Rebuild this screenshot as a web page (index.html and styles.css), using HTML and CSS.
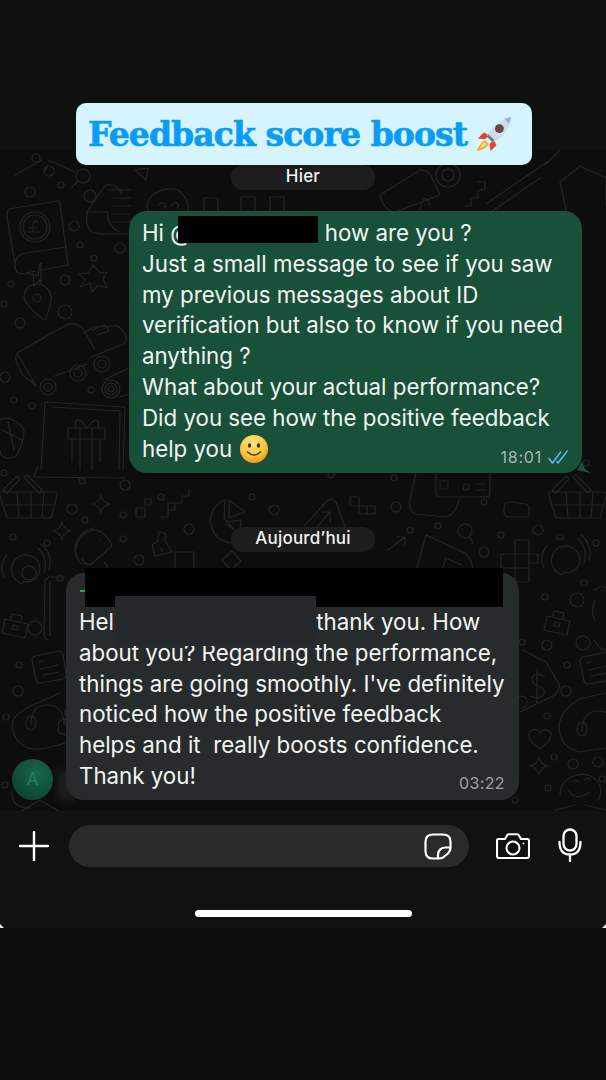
FILE: index.html
```html
<!DOCTYPE html>
<html lang="en">
<head>
    <meta charset="UTF-8">
    <meta name="viewport" content="width=device-width, initial-scale=1.0">
    <title>Feedback score boost</title>
    <link rel="stylesheet" href="styles.css">
</head>
<body>
    <div class="topBar"></div>

    <div class="banner">
        <span class="bannerText">Feedback score boost</span>
        <svg class="rocket" viewBox="0 0 38 38">
            <path d="M8 17 L2 23 L9 24 L14 20Z" fill="#e8402a"/>
            <path d="M21 30 L15 36 L14 29 L18 24Z" fill="#e8402a"/>
            <path d="M9 25 C5 27 2 33 1 36 C5 35 11 33 13 29Z" fill="#f7a823"/>
            <path d="M8 27 C6 29 5 31 4 33 C7 32 9 31 11 29Z" fill="#fde68a"/>
            <path d="M11 21 C15 12 24 4 36 1 C35 13 27 23 17 27Z" fill="#d3dce6"/>
            <path d="M29 2.700 L36 1 C35.600 3.500 35 5.800 34 8Z" fill="#8fb6d8"/>
            <path d="M11 21 L17 27 L19 25 L13 19Z" fill="#6b7785"/>
            <circle cx="24" cy="13" r="4.500" fill="#44505e"/>
            <circle cx="24" cy="13" r="2.600" fill="#a0312c"/>
        </svg>
    </div>

    <main class="chat">
        <svg class="doodles" viewBox="0 150 606 661" fill="none" stroke="#252525" stroke-width="1.200" stroke-linecap="round" stroke-linejoin="round">
            <defs>
                <path id="basket" d="M3 17 H58 Q61 17 60 21 L54 43 H10 L3 21 Q2 17 3 17Z M8 30 H56 M20 17 L22 43 M34 17 L34 43 M47 17 L45 43 M6 15 L20 1 L23 4 L10 18Z M27 2 L30 0 L45 15 L42 18Z"/>
                <path id="speech" d="M14 37 C6 33 2 27 4 19 C6 10 15 6 23 9 C31 12 34 21 30 28 C27 34 20 36 16 34Z M22 20 H22.500 M14 22 H14.500 M-4 30 C-8 22 -6 13 -1 8 M36 25 C39 17 37 7 30 1 M41 22 C44 14 41 3 33 -3"/>
                <path id="brief" d="M2 9 L25 14 L22 28 L-1 23Z M8 9 L9 4 L19 6 L18 11 M10 15 L15 16 L14 20 L9 19Z"/>
                <path id="note" d="M5 5 L29 0 Q32 0 33 3 L36 24 Q36 27 33 28 L10 32 Q7 32 6 29 L2 9 Q2 6 5 5Z M9 11 L13 10 M11 18 L28 14 M13 24 L29 21"/>
                <path id="headset" d="M-6 34 C-6 22 -2 14 10 14 C22 14 27 22 27 34 M-11 32 a5 7 0 1 0 10 0 a5 7 0 1 0 -10 0 M22 36 a7 5 0 1 0 12 0 a7 5 0 1 0 -12 0 M29 26 a5 6 0 1 0 8 0 a5 6 0 1 0 -8 0"/>
                <path id="star4" d="M9 0 C10 5 12 8 18 9 C12 10 10 13 9 18 C8 13 5 10 0 9 C5 8 8 5 9 0Z"/>
                <path id="heart" d="M12 21 C4 15 0 11 1 6 C3 0 10 0 12 5 C15 0 22 1 23 6 C23 12 19 15 12 21Z"/>
            </defs>

            <!-- left column -->
            <path d="M9 209 L58 201 Q60 201 60 203 L68 265 L26 273 Q14 276 15 264 L7 217 Q7 210 9 209Z M15 264 Q16 254 26 253 L66 247 M26 273 L38 276 L40 263 M33 273 L34 286 L40 280 L41 284 L41 263"/>
            <circle cx="35" cy="227" r="15"/><circle cx="35" cy="227" r="12"/>
            <path d="M38 222 Q33 219 33 226 V232 H28 H40 M29 228 H37"/>
            <path d="M37 284 C46 284 52 292 51 300 C50 308 47 315 45 320 C40 318 27 306 24 298 C24 290 29 284 37 284Z"/><circle cx="37" cy="298" r="4"/>
            <path d="M17 353 L68 324 Q78 322 84 330 L95 350 M36 386 L23 375 L18 366 Q14 358 17 353Z M55 376 L87 364 M91 357 L106 351 L124 344 Q128 340 124 332 L118 326 L93 327 L84 333 M92 330 L105 325 L109 331 L97 335"/>
            <circle cx="48" cy="387" r="8"/><circle cx="48" cy="387" r="4"/>
            <circle cx="78" cy="373" r="8"/><circle cx="78" cy="373" r="4"/>
            <circle cx="102" cy="364" r="8"/><circle cx="102" cy="364" r="4"/>
            <circle cx="111" cy="389" r="9"/><circle cx="111" cy="389" r="6"/><circle cx="111" cy="389" r="3"/>
            <path d="M104 380 L129 368 M120 397 L129 394"/>
            <path d="M93 265 L100 273 L107 272 L103 279 L107 288 L98 285 L92 292 L90 283 L80 287 L85 280 L79 274 L88 273Z"/>
            <path d="M46 402 L125 407 L123 470 M41 470 L45 402 M52 407 L120 411 L119 470 M68 428 H105 V439 H68Z M72 439 V462 M100 439 V462 M80 428 V470 M92 428 V470 M86 427 C80 417 73 418 76 427 M88 427 C94 417 101 419 98 427"/>
            <path d="M34 477 L125 478 M38 466 L34 477"/>
            <path d="M0 420 C8 416 18 420 24 430 C24 440 20 450 16 456 C8 460 0 458 0 450 M8 422 L14 450 M2 430 L22 440"/>
            <use href="#basket" x="-3" y="475"/>
            <use href="#basket" x="546" y="475"/>
            <use href="#star4" x="92" y="495"/>
            <use href="#star4" x="53" y="522"/>
            <path d="M136 508 h9 v9 h-9z M145 499 h6 v6 h-6z M168 503 h7 v7 h-7z M175 503 h7 v-7 h7 v-6 M175 510 h-7 v7 h-7"/>
            <path d="M225 500 A22 22 0 1 0 243 540 L224 518Z M229 500 L245 512 L229 518Z M226 522 L241 520 L240 534 L226 524"/>
            <path d="M80 563 C70 552 78 536 90 531 C100 527 110 538 112 546 L90 565Z M76 555 C72 542 82 530 94 528 M90 565 Q84 564 82 558 M100 540 H100.500 M104 545 H104.500"/>
            <path d="M104 562 Q110 567 106 573"/>
            <use href="#speech" x="8" y="547"/>
            <use href="#speech" x="548" y="538"/>
            <path d="M159 532 L166 534 L165 541 L172 552 L155 556 L152 545 L158 541Z M161 548 L162 552"/>
            <path d="M175 552 h19 v19 h-19z"/>
            <path d="M222 560 l10 -9 l9 10 l-10 9z M231 560 h.5"/>
            <use href="#brief" x="3" y="610"/>
            <use href="#brief" x="545" y="607"/>
            <path d="M65 577 h-14 q-5 0 -6 5 l-1 52 q0 5 5 6 M50 582 V636"/>
            <use href="#note" x="30" y="651"/>
            <use href="#note" x="578" y="652"/>
            <path d="M60 693 L33 705 Q12 715 12 725 Q14 745 32 749 Q45 750 65 743"/>
            <use href="#headset" x="37" y="691"/>
            <path d="M606 693 L580 699 Q560 710 559 727 Q560 748 580 752 L606 748"/>
            <use href="#headset" x="588" y="697"/>
            <path d="M15 815 L40 800 L65 815 M12 790 Q10 808 30 808"/>

            <!-- top row -->
            <path d="M122 194 Q114 180 104 187 L87 212 C85 230 90 235 108 234 H130 M108 190 H130 M112 198 H130 M112 206 H130 M112 214 H130 M112 222 H130 M87 212 H108 Q106 226 120 232"/>
            <circle cx="83" cy="176" r="7"/><path d="M78 181 L72 187"/>
            <path d="M48 165 L45 171 M42 160 L15 175 M48 160 L75 172"/>
            <circle cx="49" cy="171" r="5"/>
            <circle cx="90" cy="196" r="6"/>
            <path d="M135 170 L146 180 L148 168Z"/>
            <path d="M150 215 C140 198 160 185 178 190 C190 200 190 210 186 212"/>
            <path d="M158 205 C164 200 168 205 164 208 M171 205 C177 200 181 205 177 208"/>
            <path d="M204 198 h14 v14 h-14z M241 197 h14 v16 h-14z M270 197 h14 v16 h-14z M380 195 L420 170 Q430 170 432 178 L440 195 L395 212 Q385 212 380 195Z M478 182 h7 v8 h-7 v8 h-7 v8 h-6 M486 204 L550 160 M491 212 L540 178 M545 165 L560 150"/>
            <circle cx="448" cy="175" r="12"/><circle cx="448" cy="175" r="6"/>
            <path d="M420 210 Q424 190 430 205"/>
            <path d="M560 182 L580 166 L606 178 V205 M560 182 L566 210"/>

            <!-- middle and right -->
            <path d="M416 473 L410 500 Q408 512 416 514 L445 517 Q455 516 459 500 M436 473 V493 Q436 497 440 497 H486 Q490 497 490 493 V473 M440 481 h8 v8 h-8z M476 484 H486 M476 490 H486"/>
            <path d="M504 508 Q504 502 510 502 H514 Q520 504 526 504 Q530 506 529 512 V513 Q530 517 526 517 H510 Q504 517 504 512Z"/>
            <path d="M305 525 L328 500 Q332 498 336 502 L345 527 Q346 532 340 536 L320 545 M316 528 L330 512 M322 512 H330 V522"/>
            <path d="M350 497 h9 v9 h-9z M359 506 h8 v8 h-8z M367 506 h8 v8 h-8z"/>
            <path d="M388 550 L405 537 M397 537 H405 V545"/>
            <circle cx="465" cy="531" r="7"/><path d="M470 537 L473 543"/>
            <path d="M426 535 L415 575 M426 535 L465 553 Q475 562 472 575 M440 575 L446 558 L462 565"/>
            <path d="M515 540 h14 v14 h-14z M501 554 h14 v14 h-14z M515 554 h14 v14 h-14z M529 554 h9 v9 h-9z M515 568 h14 v14 h-14z"/>
            <path d="M523 650 L546 662 L560 686 L555 695 L520 712 M521 708 A6 6 0 1 0 515 702"/>
            <path d="M537 669 V703 M544 676 Q534 672 532 678 Q532 685 538 686 Q545 687 544 694 Q540 700 530 696"/>
            <use href="#heart" x="528" y="728"/>
            <use href="#star4" x="530" y="757"/>
            <path d="M560 795 C560 780 575 772 588 775 C600 780 604 790 598 800 M568 790 Q576 802 590 792 M574 782 Q576 778 579 782 M585 780 Q587 776 590 780"/>
            <path d="M555 810 L575 805 M585 805 L606 810"/>
            <path d="M594 590 Q606 583 606 590 M595 620 Q590 612 595 600 M594 640 Q600 650 606 650"/>

            <!-- small rings -->
            <g>
                <circle cx="36" cy="158" r="4"/><circle cx="30" cy="192" r="5"/><circle cx="61" cy="185" r="3"/>
                <circle cx="74" cy="226" r="5"/><circle cx="80" cy="245" r="3"/><circle cx="120" cy="248" r="5"/><circle cx="94" cy="258" r="3"/>
                <circle cx="65" cy="280" r="5"/><circle cx="11" cy="284" r="3"/><circle cx="4" cy="304" r="3"/><circle cx="65" cy="312" r="7"/><circle cx="20" cy="323" r="5"/>
                <circle cx="5" cy="377" r="5"/><circle cx="91" cy="390" r="3"/><circle cx="14" cy="400" r="3"/><circle cx="32" cy="406" r="3"/>
                <circle cx="4" cy="473" r="3"/><circle cx="82" cy="481" r="3"/><circle cx="125" cy="485" r="5"/><circle cx="161" cy="497" r="3"/><circle cx="123" cy="515" r="3"/>
                <circle cx="72" cy="509" r="5"/><circle cx="85" cy="520" r="3"/><circle cx="13" cy="537" r="3"/><circle cx="47" cy="543" r="3"/>
                <circle cx="189" cy="529" r="5"/><circle cx="252" cy="497" r="3"/><circle cx="274" cy="510" r="5"/>
                <circle cx="139" cy="560" r="5"/><circle cx="123" cy="539" r="3"/><circle cx="60" cy="578" r="3"/>
                <circle cx="29" cy="573" r="7"/><circle cx="35" cy="628" r="7"/><circle cx="19" cy="665" r="3"/><circle cx="18" cy="691" r="5"/><circle cx="6" cy="717" r="3"/><circle cx="5" cy="785" r="3"/>
                <circle cx="394" cy="478" r="3"/><circle cx="331" cy="475" r="3"/><circle cx="396" cy="507" r="5"/><circle cx="410" cy="530" r="3"/><circle cx="438" cy="526" r="3"/><circle cx="484" cy="552" r="5"/>
                <circle cx="484" cy="502" r="3"/><circle cx="501" cy="535" r="3"/><circle cx="538" cy="530" r="5"/><circle cx="560" cy="537" r="3"/><circle cx="596" cy="543" r="3"/>
                <circle cx="545" cy="597" r="3"/><circle cx="584" cy="583" r="3"/><circle cx="577" cy="600" r="7"/><circle cx="547" cy="645" r="5"/><circle cx="522" cy="642" r="3"/><circle cx="583" cy="643" r="7"/><circle cx="567" cy="665" r="3"/>
                <circle cx="566" cy="691" r="5"/><circle cx="547" cy="716" r="3"/><circle cx="554" cy="757" r="3"/><circle cx="573" cy="764" r="5"/><circle cx="598" cy="762" r="5"/><circle cx="602" cy="779" r="3"/><circle cx="548" cy="788" r="3"/><circle cx="515" cy="800" r="3"/>
                <circle cx="466" cy="487" r="3"/><circle cx="586" cy="463" r="3"/>
            </g>
        </svg>

        <div class="thread">
            <div class="datePill">Hier</div>

            <div class="bubble outgoing">
                <p class="msgText">Hi @<span class="nameGap"></span>how are you ?<br>Just a small message to see if you saw<br>my previous messages about ID<br>verification but also to know if you need<br>anything ?<br>What about your actual performance?<br>Did you see how the positive feedback<br>help you <svg class="smiley" viewBox="0 0 28 28">
                    <defs><radialGradient id="smileFill" cx="45%" cy="30%" r="75%"><stop offset="0" stop-color="#ffe680"/><stop offset="0.6" stop-color="#fcc63a"/><stop offset="1" stop-color="#ee8f1c"/></radialGradient></defs>
                    <circle cx="14" cy="14" r="14" fill="url(#smileFill)"/>
                    <ellipse cx="9.500" cy="10.500" rx="1.700" ry="2.300" fill="#4a3114"/>
                    <ellipse cx="18.500" cy="10.500" rx="1.700" ry="2.300" fill="#4a3114"/>
                    <path d="M7.500 17 Q14 23 20.500 17" fill="none" stroke="#4a3114" stroke-width="1.500" stroke-linecap="round"/>
                </svg></p>
                <div class="hideMention"></div>
                <div class="msgMeta">
                    <span class="msgTime">18:01</span>
                    <svg class="ticks" viewBox="0 0 22 16" fill="none" stroke="#5ab4e6" stroke-width="1.800" stroke-linecap="round" stroke-linejoin="round">
                        <path d="M1 9 L5 14 L14 2"/>
                        <path d="M10 12.500 L11 14 L21 1"/>
                    </svg>
                </div>
                <svg class="tailRight" viewBox="0 0 14 12"><path d="M5 0 Q5 7 14 12 Q8 11 0 9Z" fill="#18503a"/></svg>
            </div>

            <div class="datePill datePillToday">Aujourd’hui</div>

            <div class="incomingRow">
                <div class="avatar">A</div>
                <div class="bubble incoming">
                    <div class="tailShadow"></div>
                    <div class="senderMark"></div>
                    <p class="msgText">Hello,&nbsp; I'm doing&nbsp; well, thank you. How<br>about you? Regarding the performance,<br>things are going smoothly. I've definitely<br>noticed how the positive feedback<br>helps and it &nbsp;really boosts confidence.<br>Thank you!</p>
                    <div class="msgMeta msgMetaIn"><span class="msgTime msgTimeIn">03:22</span></div>
                    <div class="hideName"></div>
                    <div class="hideReply"></div>
                </div>
            </div>
        </div>
    </main>

    <div class="composer">
        <svg class="plusIcon" viewBox="0 0 30 30" fill="none" stroke="#fff" stroke-width="2.400" stroke-linecap="round"><path d="M15 1 V29 M1 15 H29"/></svg>
        <div class="inputBox">
            <svg class="stickerIcon" viewBox="0 0 28 27" fill="none" stroke="#fff" stroke-width="2.200" stroke-linejoin="round">
                <path d="M9 1.500 H19 Q26.500 1.500 26.500 9 V15 Q26.500 18 24 20.500 L19 24.500 Q17 25.500 15 25.500 H9 Q1.500 25.500 1.500 18 V9 Q1.500 1.500 9 1.500Z"/>
                <path d="M26.500 14.500 H22 Q15 14.500 14 21 V25.500"/>
            </svg>
        </div>
        <svg class="cameraIcon" viewBox="0 0 34 26" fill="none" stroke="#fff" stroke-width="2.100" stroke-linejoin="round">
            <path d="M2.500 6 H9 L11.500 1.800 Q12 1.200 13 1.200 H21 Q22 1.200 22.500 1.800 L25 6 H31.500 Q33 6 33 7.500 V23 Q33 25 31 25 H3 Q1 25 1 23 V7.500 Q1 6 2.500 6Z"/>
            <circle cx="17" cy="15" r="6.500"/>
            <circle cx="27.500" cy="10.500" r="1" fill="#fff" stroke="none"/>
        </svg>
        <svg class="micIcon" viewBox="0 0 24 34" fill="none" stroke="#fff" stroke-width="2.300" stroke-linecap="round">
            <rect x="5.500" y="1.500" width="13" height="21" rx="6.500"/>
            <path d="M1.500 14 Q1.500 26.500 12 26.500 Q22.500 26.500 22.500 14 M12 26.500 V33"/>
        </svg>
    </div>

    <div class="homeArea"><div class="homeBar"></div></div>
    <div class="pageEnd">
        <span class="cornerLeft"></span>
        <span class="cornerRight"></span>
    </div>
</body>
</html>
```

FILE: styles.css
```css
* {
    box-sizing: border-box;
}
html, body {
    margin: 0;
    padding: 0;
}
body {
    position: relative;
    width: 606px;
    height: 1080px;
    overflow: hidden;
    background-color: #0c0c0c;
    font-family: Inter, "Liberation Sans", sans-serif;
    color: #f3f5f4;
}
.topBar {
    height: 150px;
    background-color: #101010;
}
.banner {
    position: absolute;
    left: 76px;
    top: 103px;
    width: 456px;
    height: 62px;
    padding-left: 12px;
    display: flex;
    align-items: center;
    gap: 8px;
    background-color: #d5f4fe;
    border-radius: 10px;
    z-index: 3;
}
.bannerText {
    width: 380px;
    font-family: "DejaVu Serif", "Liberation Serif", serif;
    font-weight: 700;
    font-size: 33px;
    letter-spacing: -0.9px;
    -webkit-text-stroke: 0.7px #0a9cf5;
    color: #0a9cf5;
    white-space: nowrap;
}
.rocket {
    width: 37px;
    height: 37px;
    flex: none;
}
.chat {
    position: relative;
    height: 661px;
    background-color: #0d0d0d;
    overflow: hidden;
}
.doodles {
    position: absolute;
    left: 0;
    top: 0;
    width: 606px;
    height: 661px;
}
.thread {
    position: relative;
    z-index: 0;
    display: flex;
    flex-direction: column;
    padding-top: 15px;
}
.datePill {
    align-self: center;
    width: 144px;
    height: 25px;
    line-height: 23px;
    text-align: center;
    font-size: 17px;
    font-weight: 500;
    letter-spacing: 0.2px;
    color: #f2f2f2;
    background-color: #1d1d1d;
    border-radius: 12px;
}
.datePillToday {
    margin-top: 54px;
}
.bubble {
    position: relative;
    width: 453px;
    border-radius: 18px;
}
.outgoing {
    align-self: flex-end;
    height: 262px;
    margin-top: 21px;
    margin-right: 24px;
    padding: 7px 13px 0;
    background-color: #18503a;
}
.incomingRow {
    display: flex;
    align-items: flex-end;
    margin-top: 21px;
    padding-left: 12px;
}
.incoming {
    height: 227px;
    margin-left: 13px;
    padding: 34px 13px 0;
    background-color: #282b2b;
}
.msgText {
    margin: 0;
    font-size: 22.3px;
    line-height: 30.8px;
    white-space: nowrap;
    color: #f1f4f2;
}
.nameGap {
    display: inline-block;
    width: 133px;
}
.smiley {
    width: 28px;
    height: 28px;
    vertical-align: -6px;
    margin-left: 2px;
}
.msgMeta {
    position: absolute;
    right: 14px;
    bottom: 6px;
    display: flex;
    align-items: center;
    gap: 6px;
}
.msgMetaIn {
    bottom: 7px;
}
.msgTime {
    font-size: 16px;
    letter-spacing: 0.8px;
    color: #a3bbaf;
}
.msgTimeIn {
    letter-spacing: 0.4px;
    color: #a0a3a3;
}
.ticks {
    width: 20px;
    height: 15px;
}
.tailRight {
    position: absolute;
    right: -9px;
    bottom: 0;
    width: 14px;
    height: 12px;
}
.avatar {
    width: 41px;
    height: 41px;
    margin-bottom: 0;
    flex: none;
    text-align: center;
    line-height: 41px;
    font-size: 17px;
    color: #2f7a5c;
    background: radial-gradient(circle at 60% 35%, #17684a, #0e4531 75%);
    border-radius: 50%;
}
.tailShadow {
    position: absolute;
    left: -8px;
    bottom: 0;
    width: 16px;
    height: 30px;
    background-color: #1c1e1d;
    filter: blur(3px);
    z-index: -1;
}
.hideMention {
    position: absolute;
    left: 49px;
    top: 5px;
    width: 140px;
    height: 27px;
    background-color: #000;
}
.senderMark {
    position: absolute;
    left: 14px;
    top: 17px;
    width: 5px;
    height: 2px;
    background-color: #1fa855;
}
.hideName {
    position: absolute;
    left: 19px;
    top: -5px;
    width: 418px;
    height: 39px;
    background-color: #000;
}
.hideReply {
    position: absolute;
    left: 49px;
    top: 23px;
    width: 201px;
    height: 50px;
    background-color: #26292c;
}
.composer {
    height: 117px;
    padding: 14px 0 0 19px;
    display: flex;
    align-items: flex-start;
    background-color: #111111;
}
.plusIcon {
    width: 30px;
    height: 30px;
    margin-top: 6px;
    flex: none;
}
.inputBox {
    width: 400px;
    height: 42px;
    margin-left: 20px;
    padding-right: 17px;
    display: flex;
    align-items: center;
    justify-content: flex-end;
    background-color: #2a2a2a;
    border-radius: 21px;
}
.stickerIcon {
    width: 28px;
    height: 27px;
}
.cameraIcon {
    width: 34px;
    height: 26px;
    margin: 8px 0 0 27px;
    flex: none;
}
.micIcon {
    width: 24px;
    height: 34px;
    margin: 3px 0 0 28px;
    flex: none;
}
.homeArea {
    position: absolute;
    left: 0;
    top: 910px;
    width: 606px;
    display: flex;
    justify-content: center;
}
.homeBar {
    width: 217px;
    height: 7px;
    background-color: #fff;
    border-radius: 4px;
}
.pageEnd {
    position: relative;
    height: 152px;
    background-color: #0c0c0c;
}
.cornerLeft,
.cornerRight {
    position: absolute;
    top: -4px;
    width: 4px;
    height: 4px;
    background-color: #e8e8e8;
}
.cornerLeft {
    left: 0;
    clip-path: polygon(0 0, 100% 100%, 0 100%);
}
.cornerRight {
    right: 0;
    clip-path: polygon(100% 0, 100% 100%, 0 100%);
}
```
